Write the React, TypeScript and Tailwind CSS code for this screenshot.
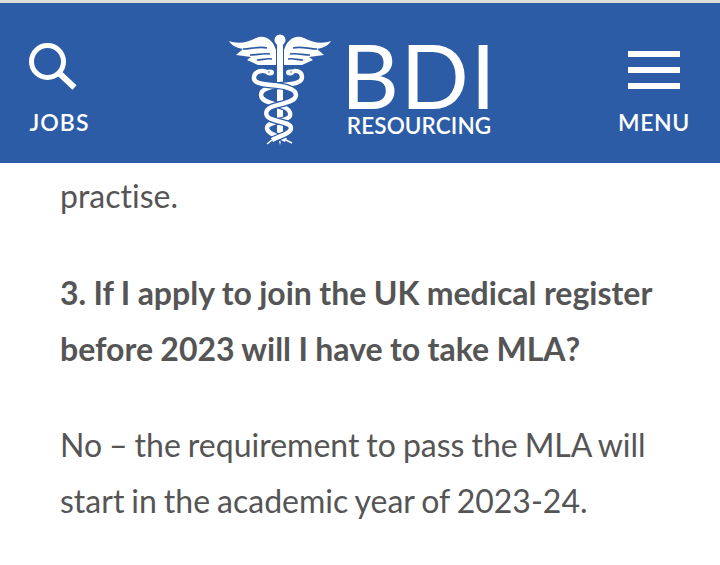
function Caduceus() {
  const snake = 'M270 72 C264 68 256 70 255 76 C254 82 262 83 272 84 C284 85 297 87 297 94 C297 101 284 102 275 105 C268 107 266 111 268 115 C271 121 292 120 292 127 C292 133 280 135 273 139';
  const snake2 = 'M291 72 C296 68 303 70 303 76 C303 82 294 83 285 84 C274 85 262 87 262 94 C262 101 274 102 282 105 C289 107 292 111 291 115 C288 121 268 120 268 127 C268 133 279 135 287 139';
  return (
    <svg width="104" height="114" viewBox="229 32 104 114" className="shrink-0">
      <circle cx="281" cy="39" r="5.5" fill="#fff" />
      <path d="M278 44 H284 V132 L281 144 L278 132 Z" fill="#fff" />
      {/* wings */}
      <path d="M230 40 C238 43 248 42 257 37 C266 33 274 39 277 49 V64 L259 64 L248 59 L252 56 L237 54 L244 48 C238 47 233 45 230 40 Z" fill="#fff" />
      <path d="M332 40 C324 43 314 42 305 37 C296 33 288 39 285 49 V64 L303 64 L314 59 L310 56 L325 54 L318 48 C324 47 329 45 332 40 Z" fill="#fff" />
      <path d="M244 48 C252 48 260 45 268 47 M251 54 C258 54 264 52 271 53 M258 59 C263 59 268 57 273 58" stroke="#2d5ca6" strokeWidth="1.6" fill="none" />
      <path d="M318 48 C310 48 302 45 294 47 M311 54 C304 54 298 52 291 53 M304 59 C299 59 294 57 289 58" stroke="#2d5ca6" strokeWidth="1.6" fill="none" />
      {/* snakes */}
      <path d={snake2} stroke="#2d5ca6" strokeWidth="7" fill="none" />
      <path d={snake2} stroke="#fff" strokeWidth="4.4" fill="none" />
      <path d={snake} stroke="#2d5ca6" strokeWidth="7" fill="none" />
      <path d={snake} stroke="#fff" strokeWidth="4.4" fill="none" />
      <path d="M273 139 L268 143 M287 139 L293 142" stroke="#fff" strokeWidth="1.5" fill="none" />
      <ellipse cx="271" cy="71.5" rx="4" ry="3" fill="#fff" />
      <ellipse cx="291" cy="71.5" rx="4" ry="3" fill="#fff" />
      <circle cx="270" cy="71" r="0.8" fill="#2d5ca6" />
      <circle cx="292" cy="71" r="0.8" fill="#2d5ca6" />
    </svg>
  );
}

export default function App() {
  return (
    <div className="w-[720px] h-[565px] bg-white overflow-hidden font-['Lato',sans-serif] [font-variant-ligatures:none]">
      <div className="h-[3px] bg-[#dddddd]" />
      <header className="h-[160px] bg-[#2d5ca6] text-white flex items-start justify-between">
        <div className="w-[120px] flex flex-col items-center pt-[39px]">
          <svg width="60" height="52" viewBox="28 42 60 52" className="ml-[-7px]">
            <circle cx="48.5" cy="61.5" r="16" stroke="#fff" strokeWidth="5" fill="none" />
            <path d="M60 73 L75.5 87.5" stroke="#fff" strokeWidth="6" fill="none" />
          </svg>
          <span className="text-[23px] leading-[28px] tracking-[1px] font-semibold mt-[14px] ml-[-1px]">JOBS</span>
        </div>
        <div className="flex items-start pt-[30px] ml-[3px]">
          <Caduceus />
          <div className="ml-[15px] mt-[3px] flex flex-col">
            <span className="text-[90px] leading-[76px] h-[76px] font-normal tracking-[1.5px] ml-[-6px]">BDI</span>
            <span className="text-[22.5px] leading-[26px] font-semibold mt-[1px] tracking-[0.1px]">RESOURCING</span>
          </div>
        </div>
        <div className="w-[102px] mr-[16px] flex flex-col items-center pt-[48px] pl-[2px]">
          <div className="flex flex-col gap-[10px]">
            <div className="w-[52px] h-[6px] bg-white" />
            <div className="w-[52px] h-[6px] bg-white" />
            <div className="w-[52px] h-[6px] bg-white" />
          </div>
          <span className="text-[23px] leading-[28px] tracking-[0.6px] font-semibold mt-[19px]">MENU</span>
        </div>
      </header>
      <main className="px-[60px] pt-[5px] text-[32px] leading-[56px] text-[#555555]">
        <p className="[word-spacing:-1.2px]">practise.</p>
        <p className="mt-[41px] font-bold [word-spacing:-0.4px]">3. If I apply to join the UK medical register before 2023 will I have to take MLA?</p>
        <p className="mt-[40px] [word-spacing:-1.2px]">No – the requirement to pass the MLA will start in the academic year of 2023-24.</p>
      </main>
    </div>
  );
}
